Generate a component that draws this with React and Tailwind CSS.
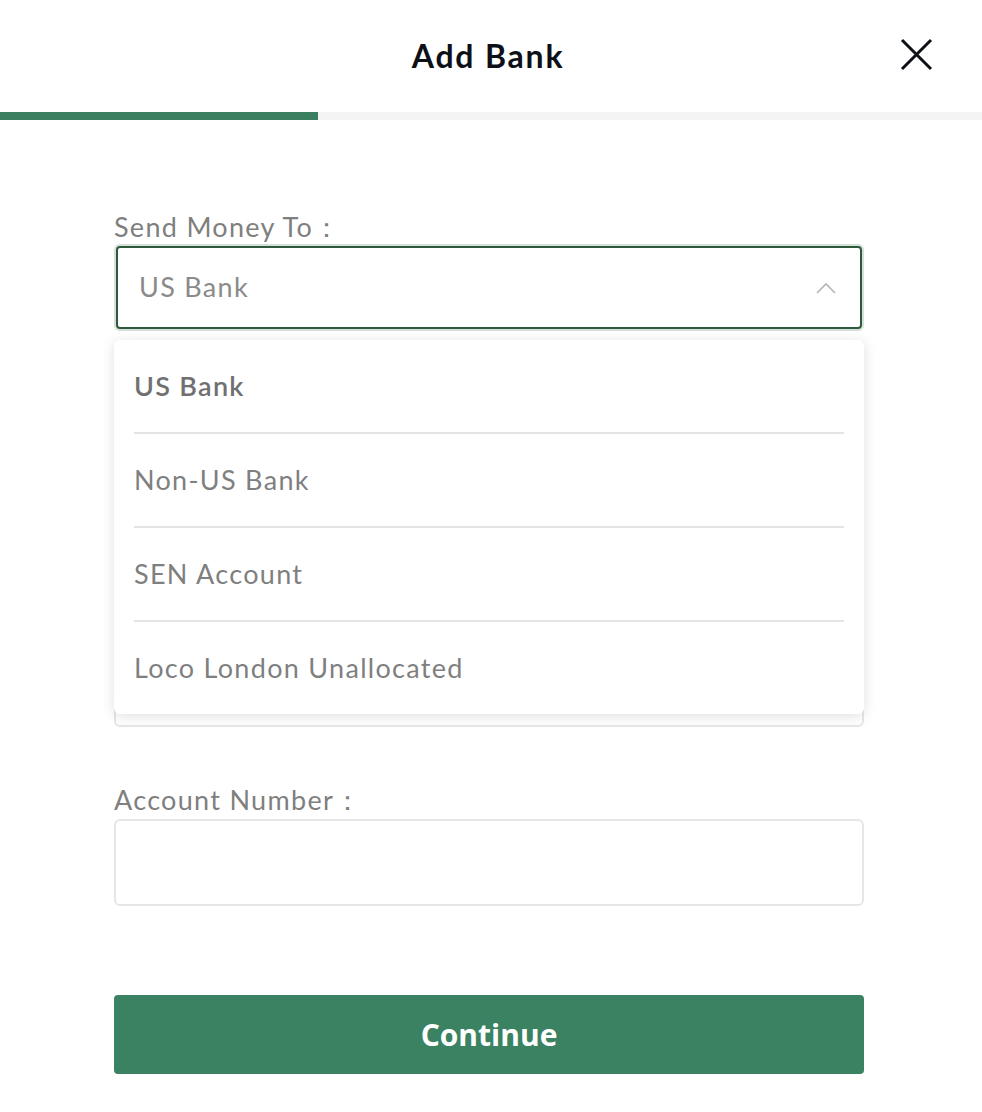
import { useState } from "react";

const options = ["US Bank", "Non-US Bank", "SEN Account", "Loco London Unallocated"];

const App = () => {
  const [selected] = useState("US Bank");

  return (
    <div className="min-h-screen w-[982px] bg-white font-['Lato',sans-serif]">
      {/* Header */}
      <div className="relative flex h-[112px] items-center justify-center">
        <h1 className="ml-[-6px] text-[32px] font-bold tracking-[1.8px] text-[#0d1117]">Add Bank</h1>
        <button className="absolute right-[49px] top-[38px] h-[33px] w-[33px]">
          <svg viewBox="0 0 33 33" className="h-full w-full" fill="none" stroke="#0d1117" strokeWidth="3">
            <path d="M2 2 L31 31 M31 2 L2 31" />
          </svg>
        </button>
      </div>

      {/* Progress */}
      <div className="flex h-2 bg-[#f4f4f4]">
        <div className="w-[318px] bg-[#3a8060]"></div>
      </div>

      {/* Form */}
      <div className="pl-[114px] pr-[118px] pt-[91px] tracking-[1.3px]">
        <div className="relative">
          <label className="block text-[27px] leading-[32px] text-[#7f7f7f]">Send Money To：</label>
          <div className="mx-[2px] mt-[3px] flex h-[83px] items-center justify-between rounded-[4px] border-2 border-[#2e5a3c] px-[21px] shadow-[0_0_0_2px_#d6e0da]">
            <span className="text-[27px] text-[#8a8a8a]">{selected}</span>
            <svg viewBox="0 0 20 12" className="mr-[3px] h-[12px] w-[20px]" fill="none" stroke="#b5b5b5" strokeWidth="1.6">
              <path d="M1 11 L10 2 L19 11" />
            </svg>
          </div>

          {/* Dropdown */}
          <div className="absolute left-0 top-[129px] z-10 w-full rounded-[6px] bg-white px-5 shadow-[0_2px_14px_rgba(0,0,0,0.13)]">
            {options.map((opt, i) => (
              <div
                key={opt}
                className={`flex items-center text-[27px] ${
                  i < options.length - 1 ? "h-[94px] border-b-2 border-[#e4e4e4]" : "h-[92px]"
                } ${opt === selected ? "font-semibold text-[#707070]" : "text-[#7f7f7f]"}`}
              >
                {opt}
              </div>
            ))}
          </div>
        </div>

        {/* Hidden field (under dropdown) */}
        <div className="mt-[277px]">
          <label className="block text-[27px] leading-[32px] text-[#7f7f7f]">Bank Name：</label>
          <div className="mt-[3px] h-[86px] rounded-[6px] border-2 border-[#e6e6e6]"></div>
        </div>

        <div className="mt-[57px]">
          <label className="block text-[27px] leading-[32px] text-[#7f7f7f]">Account Number：</label>
          <div className="mt-[3px] h-[87px] rounded-[6px] border-2 border-[#e6e6e6]"></div>
        </div>

        <button className="mt-[89px] flex h-[79px] w-full items-center justify-center rounded-[4px] bg-[#3a8262] font-['Open_Sans',sans-serif] text-[30px] font-bold tracking-normal text-white">
          Continue
        </button>
      </div>
    </div>
  );
};

export default App;
